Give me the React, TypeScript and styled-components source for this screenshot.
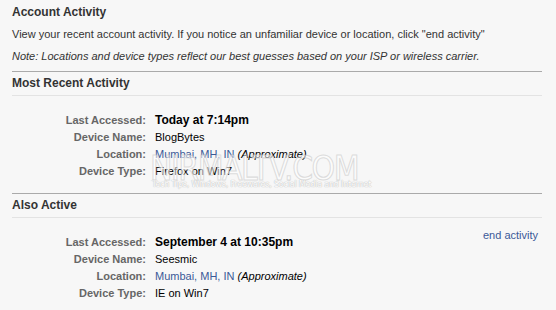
import styled, { createGlobalStyle } from 'styled-components';

const GlobalStyle = createGlobalStyle`
    body {
        margin: 0;
        background: #f7f7f7;
        font-family: 'Liberation Sans', Arial, sans-serif;
        font-size: 11px;
        color: #333;
    }
`;

const Page = styled.div`
    position: relative;
    width: 530px;
    padding: 1px 14px 0 12px;
    height: 309px;
    overflow: hidden;
`;

const Title = styled.div`
    font-weight: bold;
    font-size: 12px;
    line-height: 22px;
`;

const Line = styled.div<{ $italic?: boolean }>`
    line-height: 22px;
    font-style: ${p => (p.$italic ? 'italic' : 'normal')};
`;

const Section = styled.div`
    margin-top: 4px;
    border-top: 1px solid #aaa;
`;

const SectionHead = styled.div`
    display: flex;
    font-weight: bold;
    font-size: 12px;
    line-height: 23px;
    border-bottom: 1px solid #e3e3e3;
`;

const Body = styled.div`
    position: relative;
    padding: 16px 0 9px;
`;

const Grid = styled.div`
    display: grid;
    grid-template-columns: 134px auto;
    column-gap: 9px;
    line-height: 17px;
`;

const Label = styled.div`
    text-align: right;
    font-weight: bold;
    color: #666;
`;

const Value = styled.div<{ $strong?: boolean }>`
    color: #000;
    font-weight: ${p => (p.$strong ? 'bold' : 'normal')};
    font-size: ${p => (p.$strong ? '12px' : '11px')};
`;

const Place = styled.span`
    color: #3b5998;
`;

const Approx = styled.span`
    font-style: italic;
    color: #000;
`;

const EndLink = styled.a`
    position: absolute;
    right: 4px;
    top: 11px;
    color: #3b5998;
    text-decoration: none;
    font-size: 11px;
`;

const Watermark = styled.div`
    position: absolute;
    left: 150px;
    top: 150px;
    pointer-events: none;
    display: flex;
    flex-direction: column;
    align-items: flex-start;
`;

const MarkTitle = styled.div`
    font-family: 'DejaVu Sans', sans-serif;
    font-size: 30px;
    line-height: 32px;
    letter-spacing: -1.5px;
    transform: scaleY(1.15);
    transform-origin: top left;
    color: rgba(255, 255, 255, 0.5);
    -webkit-text-stroke: 1px rgba(190, 190, 190, 0.5);
`;

const MarkSub = styled.div`
    margin-top: -2px;
    margin-left: 2px;
    font-family: 'DejaVu Sans', sans-serif;
    font-size: 8px;
    line-height: 10px;
    letter-spacing: -0.2px;
    color: #fff;
    text-shadow: 0 0 1px #bbb, 0 0 1px #bbb;
`;

type Info = { last: string; name: string; type: string };

const ActivityGrid = ({ last, name, type }: Info) => (
    <Grid>
        <Label>Last Accessed:</Label>
        <Value $strong>{last}</Value>
        <Label>Device Name:</Label>
        <Value>{name}</Value>
        <Label>Location:</Label>
        <Value>
            <Place>Mumbai, MH, IN</Place> <Approx>(Approximate)</Approx>
        </Value>
        <Label>Device Type:</Label>
        <Value>{type}</Value>
    </Grid>
);

export default function App() {
    return (
        <Page>
            <GlobalStyle />
            <Title>Account Activity</Title>
            <Line>View your recent account activity. If you notice an unfamiliar device or location, click "end activity"</Line>
            <Line $italic>Note: Locations and device types reflect our best guesses based on your ISP or wireless carrier.</Line>

            <Section>
                <SectionHead>Most Recent Activity</SectionHead>
                <Body>
                    <ActivityGrid last="Today at 7:14pm" name="BlogBytes" type="Firefox on Win7" />
                </Body>
            </Section>

            <Section>
                <SectionHead>Also Active</SectionHead>
                <Body>
                    <ActivityGrid last="September 4 at 10:35pm" name="Seesmic" type="IE on Win7" />
                    <EndLink href="#">end activity</EndLink>
                </Body>
            </Section>

            <Watermark>
                <MarkTitle>NIRMALTV.COM</MarkTitle>
                <MarkSub>Tech Tips, Windows, Freewares, Social Media and Internet</MarkSub>
            </Watermark>
        </Page>
    );
}
